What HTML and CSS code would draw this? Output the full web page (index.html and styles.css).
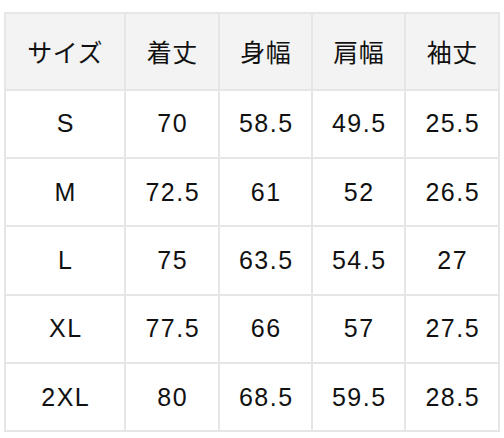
FILE: index.html
```html
<!DOCTYPE html>
<html lang="ja">
<head>
<meta charset="utf-8">
<link rel="stylesheet" href="styles.css">
</head>
<body>
<table class="size-table">
  <colgroup>
    <col class="c1"><col class="c2"><col class="c3"><col class="c4"><col class="c5">
  </colgroup>
  <thead>
    <tr class="head"><th>サイズ</th><th>着丈</th><th>身幅</th><th>肩幅</th><th>袖丈</th></tr>
  </thead>
  <tbody>
    <tr><td>S</td><td>70</td><td>58.5</td><td>49.5</td><td>25.5</td></tr>
    <tr><td>M</td><td>72.5</td><td>61</td><td>52</td><td>26.5</td></tr>
    <tr><td>L</td><td>75</td><td>63.5</td><td>54.5</td><td>27</td></tr>
    <tr><td>XL</td><td>77.5</td><td>66</td><td>57</td><td>27.5</td></tr>
    <tr><td>2XL</td><td>80</td><td>68.5</td><td>59.5</td><td>28.5</td></tr>
  </tbody>
</table>
</body>
</html>
```

FILE: styles.css
```css
html, body {
  margin: 0;
  padding: 0;
  background: #ffffff;
}
body {
  padding: 12px 0 0 4px;
  font-family: "Liberation Sans", Arial, "Noto Sans CJK JP", sans-serif;
  color: #111111;
}
.size-table {
  border-collapse: collapse;
  table-layout: fixed;
  width: 494px;
}
.c1 { width: 120px; }
.c2 { width: 94px; }
.c3 { width: 93px; }
.c4 { width: 93px; }
.c5 { width: 94px; }
.size-table th,
.size-table td {
  border: 2px solid #e6e6e6;
  text-align: center;
  vertical-align: middle;
  font-size: 25px;
  letter-spacing: 1.5px;
  text-indent: 1.5px;
  font-weight: normal;
  padding: 0;
}
.size-table th {
  background: #f3f3f3;
  height: 74.5px;
  font-family: "Noto Sans CJK JP", sans-serif;
  letter-spacing: 0.5px;
  text-indent: 0.5px;
}
.size-table td {
  height: 66.4px;
}
```
